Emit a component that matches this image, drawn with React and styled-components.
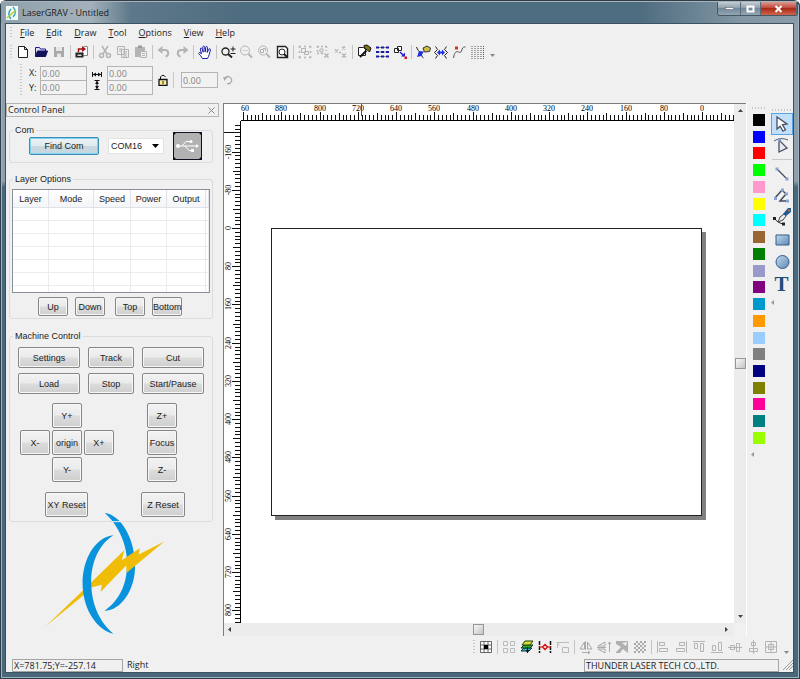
import { useLayoutEffect, useRef, useState } from "react";
import styled, { createGlobalStyle } from "styled-components";

const DARK = "#222";
const GREY = "#b4b4b4";
const BLUE = "#1a1aa8";

const icons = {
  new: <path d="M3.5 2.5h6l3 3v8h-9zM9.500 2.500v3h3" fill="#fff" stroke={DARK} />,
  open: (
    <>
      <path d="M2.500 12.500v-9h4l1 1.500h5v2" fill="#dde" stroke={BLUE} />
      <path d="M2.500 12.500l2-5.500h10l-2 5.500z" fill="#11115c" stroke="#11115c" />
    </>
  ),
  save: (
    <>
      <path d="M3 3h10v10H3z" fill="#a9a9a9" />
      <path d="M5 3h6v4H5zM6 9.500h4V13H6z" fill="#e6e6e6" />
    </>
  ),
  import: (
    <>
      <path d="M9.500 2.500h4v9h-4" fill="#fff" stroke="#888" />
      <path d="M1.500 8.500h8v5h-8z" fill="#222" />
      <path d="M3.500 10.500h4v1.500h-4z" fill="#ddd" />
      <path d="M4.500 8V5H9" fill="none" stroke="#a01010" strokeWidth="1.500" />
      <path d="M8 2l4 3-4 3z" fill="#a01010" />
    </>
  ),
  cut: (
    <g fill="none" stroke={GREY} strokeWidth="1.500">
      <path d="M5 2l5 8M11 2l-5 8" />
      <circle cx="4.500" cy="11.500" r="2" />
      <circle cx="11.500" cy="11.500" r="2" />
    </g>
  ),
  copy: (
    <g fill="#eee" stroke={GREY}>
      <path d="M2.500 2.500h7v8h-7zM6.500 5.500h7v8h-7z" />
      <path d="M4 5h3M4 7h2M8 8h4M8 10h4M8 12h4" />
    </g>
  ),
  paste: (
    <>
      <path d="M2 3h10v10H2z" fill={GREY} />
      <path d="M5 1.500h4v2.500H5z" fill="#999" />
      <path d="M7.500 7.500h6v6h-6zM9 9.500h3M9 11.500h3" fill="#eee" stroke={GREY} />
    </>
  ),
  undo: (
    <>
      <path d="M4 6h5.500a3.300 3.300 0 0 1 0 6.500" fill="none" stroke={GREY} strokeWidth="2" />
      <path d="M1.500 6L6.500 2v8z" fill={GREY} />
    </>
  ),
  redo: (
    <>
      <path d="M12 6H6.500a3.300 3.300 0 0 0 0 6.500" fill="none" stroke={GREY} strokeWidth="2" />
      <path d="M14.500 6L9.500 2v8z" fill={GREY} />
    </>
  ),
  hand: (
    <path
      d="M5.500 14.500c-1-2-2.500-3.500-3.800-5 .3-1.700 1.800-1 2.800.5L3.300 5c.3-1.500 1.600-1 2 .2l.9 3-.4-5c.2-1.500 1.700-1.500 1.900 0l.5 4.800.6-4.800c.4-1.300 1.700-1 1.700.3l-.3 5 1.600-3.300c.8-1 1.900-.4 1.600.8-.8 3-1.400 6-2.900 8.500z"
      fill="#fff"
      stroke={BLUE}
    />
  ),
  zoom: (
    <g fill="none" stroke={DARK}>
      <circle cx="5.500" cy="7.500" r="3.500" strokeWidth="1.300" />
      <path d="M8 10l4 3.500" strokeWidth="2" />
      <path d="M10.500 5h5M13 2.500v5M10.500 9.500h5" />
    </g>
  ),
  zoomOut: (
    <g fill="none" stroke={GREY}>
      <circle cx="7" cy="6.500" r="4.500" />
      <path d="M4.500 6.500h5" strokeDasharray="1 1" />
      <path d="M10.500 10l3.500 3.500" strokeWidth="2" />
    </g>
  ),
  zoomAll: (
    <g fill="none" stroke={GREY}>
      <circle cx="7" cy="6.500" r="4.500" />
      <path d="M4.500 5.500h3v3h-3zM7 4.500h2.500V7" />
      <path d="M10.500 10l3.500 3.500" strokeWidth="2" />
    </g>
  ),
  zoomPage: (
    <g fill="none" stroke={DARK}>
      <path d="M3.500 2.500h8l2 2v9h-10z" fill="#fff" strokeWidth="1.400" />
      <circle cx="8" cy="8" r="3" />
      <path d="M10 10l3 3" strokeWidth="2" />
    </g>
  ),
  group: (
    <g fill="none" stroke={GREY}>
      <path d="M2 2.500h12M2 13.500h12M2.500 2v12M13.500 2v12" strokeDasharray="2 3" strokeWidth="1.500" />
      <path d="M4.500 4.500h4v4h-4zM7.500 7.500h4v3h-4z" />
    </g>
  ),
  ungroup: (
    <g fill="none" stroke={GREY}>
      <path d="M2 2.500h9M2 9.500h6M2.500 2v8M11.500 2v5" strokeDasharray="2 2" strokeWidth="1.500" />
      <path d="M5 5h3v3H5z" />
      <path d="M9.500 9.500l4 4M13.500 9.500l-4 4" strokeWidth="1.500" />
    </g>
  ),
  ungroupAll: (
    <g fill="none" stroke={GREY} strokeWidth="1.300">
      <path d="M2 5.500l3 3M5 5.500l-3 3M9 2.500l3 3M12 2.500l-3 3" />
      <path d="M9 9.500l4 4M13 9.500l-4 4M6 8.500h2" />
    </g>
  ),
  hammer: (
    <>
      <path d="M2.500 3.500h5l2 2v6h-7z" fill="#fff" stroke={DARK} />
      <path d="M8 1.500l3-.5 4 3-1.500 4-2-2-3-1.500z" fill="#7d7414" stroke="#111" />
      <path d="M10.500 6.500L4 13" stroke="#111" strokeWidth="2" />
    </>
  ),
  array: (
    <>
      <path d="M2 3.500h13M2 8h13M2 12.500h13" stroke="#888" />
      <g fill={BLUE}>
        {[2.5, 7, 11.5].map((y) =>
          [2, 7, 12].map((x) => <rect key={`${x}-${y}`} x={x} y={y} width="3" height="2" />)
        )}
      </g>
    </>
  ),
  follow: (
    <>
      <path d="M5.500 2.500h4v4h-4zM2.500 4.500h4v4h-4z" fill="#fff" stroke={DARK} />
      <path d="M8 8l4 4" stroke="#2020d0" strokeWidth="1.500" />
      <path d="M9 12.500h4v-4z" fill="#2020d0" />
      <path d="M12.500 12.500h2.500v2.500h-2.500z" fill="#d01010" />
    </>
  ),
  node: (
    <>
      <path d="M1.500 3c1 3 2.500 4 4 6s1 4 3 5" fill="none" stroke={DARK} />
      <path d="M4 7l5 .5-3 4.500-4 1z" fill="#2030e0" />
      <path d="M8 4l4-2 3.500 2-1 3.500-5 .5z" fill="#c9c04a" stroke="#333" />
    </>
  ),
  mirror: (
    <>
      <path d="M2.500 2.500l2 3-3 3 3 3-2 3M13.500 2.500l-2 3 3 3-3 3 2 3" fill="none" stroke={DARK} />
      <path d="M4 8.500L7 5.500v2h2v-2l3 3-3 3v-2H7v2z" fill="#2030e0" />
    </>
  ),
  curve: (
    <>
      <path d="M2.500 14c1-6 3-7 5-6s3 0 3.500-2.500S13 3 14.500 3" fill="none" stroke="#555" />
      <path d="M4 2.500h3v3H4z" fill="#e03020" />
    </>
  ),
  dots: (
    <path d="M3 2v13M6 2v13M9 2v13M12 2v13M14.500 2v13" stroke="#555" strokeDasharray="1 1" fill="none" />
  ),
  anchor: (
    <>
      <path d="M2.500 2.500h11v11h-11zM2.500 6h11M2.500 10h11M6 2.500v11M10 2.500v11" fill="#fff" stroke="#666" />
      <path d="M6 6h4v4H6z" fill="#000" />
    </>
  ),
  tiles: <path d="M2.500 2.500h4v4h-4zM9.500 2.500h4v4h-4zM2.500 9.500h4v4h-4zM9.500 9.500h4v4h-4z" fill="none" stroke="#bbb" />,
  stack: (
    <>
      <path d="M2 12l3-3h8l-3 3z" fill="#23c3d8" stroke="#134" />
      <path d="M2 9l3-3h9l-3 3z" fill="#27b432" stroke="#131" />
      <path d="M3 6l3-4h8l-3 4z" fill="#d8dc34" stroke="#241" />
      <path d="M8.500 8v6" stroke="#111" />
      <path d="M6.500 11h4l-2 3z" fill="#111" />
    </>
  ),
  spacing: (
    <>
      <path d="M2.500 2v12M13.500 2v12" stroke="#111" strokeWidth="1.500" strokeDasharray="4 1" />
      <path d="M5.500 8L8 5.500 10.500 8 8 10.500z" fill="none" stroke="#e01010" strokeWidth="1.500" />
      <path d="M2 8h3M11 8h3" stroke="#e01010" />
    </>
  ),
  corner: <path d="M2.500 9V3.500H14M5 6.500l-3-3M7.500 8.500h6v5h-6z" fill="none" stroke="#bbb" />,
  flipH: <path d="M7.500 2v9M6.500 3v7h-4.500zM9.500 3v7h4.500zM4 13.500h8M10 12l2 1.500-2 1.500" fill="none" stroke="#aaa" />,
  flipV: <path d="M1 8.500h9M9 7V3L2 7zM9 10v4l-7-4zM13.500 13V3M12 5l1.500-2L15 5" fill="none" stroke="#aaa" />,
  rotate: (
    <>
      <path d="M2 2h12v12H2z" fill="#b0b0b0" />
      <path d="M2 5l5 3-5 5zM8 4l5-1-1 4zM6 14l3-4 5 4z" fill="#f0f0f0" />
    </>
  ),
  checker: (
    <g fill="#aaa">
      {[2, 4, 6, 8, 10, 12].map((y) =>
        [0, 4, 8].map((x) => <rect key={`${x}-${y}`} x={x + 2 + (y % 4 ? 2 : 0)} y={y} width="2" height="2" />)
      )}
    </g>
  ),
  alignLeft: <path d="M2.500 2v12M4.500 3.500h5v3h-5zM4.500 9.500h8v3h-8z" fill="none" stroke="#b4b4b4" />,
  alignRight: <path d="M13.500 2v12M6.500 3.500h5v3h-5zM3.500 9.500h8v3h-8z" fill="none" stroke="#b4b4b4" />,
  alignTop: <path d="M2 2.500h12M3.500 4.500h3v5h-3zM9.500 4.500h3v8h-3z" fill="none" stroke="#b4b4b4" />,
  alignBottom: <path d="M2 13.500h12M3.500 6.500h3v5h-3zM9.500 3.500h3v8h-3z" fill="none" stroke="#b4b4b4" />,
  centerH: <path d="M1 8.500h14M3.500 6.500h4v4h-4zM9.500 4.500h3v8h-3z" fill="none" stroke="#b4b4b4" />,
  centerV: <path d="M8.500 1v14M6.500 3.500h4v3h-4zM4.500 9.500h8v3h-8z" fill="none" stroke="#b4b4b4" />,
  centerPage: <path d="M2.500 2.500h11v11h-11zM8 2.500v11M2.500 8h11M5.500 5.500h5v5h-5z" fill="none" stroke="#b4b4b4" />,
};

const drawIcons = {
  select: <path d="M5 3l10 7-4.500.8 3 5-2.500 1.400-2.800-5L5 15z" fill="#fff" stroke="#4a4f60" strokeWidth="1.300" />,
  shape: (
    <>
      <path d="M2 5c5-3 9-3 14-1" fill="none" stroke="#556" />
      <path d="M7 4v12l8-4z" fill="#e8ebf2" stroke="#4a4f60" strokeWidth="1.300" />
      <path d="M6 2.500h3v3H6z" fill="#7fa0cc" />
    </>
  ),
  line: (
    <>
      <path d="M5 5l10 10" stroke="#444a5c" strokeWidth="1.300" />
      <path d="M3.500 3.500h3v3h-3zM13.500 13.500h3v3h-3z" fill="#8aa3d6" />
    </>
  ),
  polyline: (
    <>
      <path d="M3 12l7-8 4 4-6 7h8" fill="none" stroke="#444a5c" strokeWidth="1.500" />
      <path d="M9 2.500h3v3H9zM13 6.500h3v3h-3zM2 11h3v3H2zM14 13.500h3v3h-3z" fill="#8aa3d6" />
    </>
  ),
  pen: (
    <>
      <path d="M2 10c2 3 5 5 9 6" fill="none" stroke="#222" />
      <path d="M1 9h3v3H1zM10 14.500h3v3h-3z" fill="#222" />
      <path d="M6 14l2-5 4-3 2 2-3 4z" fill="#eee" stroke="#444" />
      <path d="M11 6l5-6h3v4l-5 4z" fill="#245a91" />
      <path d="M16 2l2 1" stroke="#d96b33" strokeWidth="1.500" />
    </>
  ),
  rect: <path d="M4 5h13v10H4z" fill="url(#toolFill)" stroke="#345c87" />,
  ellipse: <circle cx="10.500" cy="10" r="6.500" fill="url(#toolFill)" stroke="#345c87" />,
};

const colors = [
  "#000000", "#0000ff", "#ff0000", "#00ff00", "#ff99cc", "#ffff00", "#00ffff",
  "#996633", "#008000", "#9999cc", "#800080", "#0099cc", "#ff9900", "#99ccff",
  "#808080", "#000080", "#808000", "#ff0099", "#008080", "#99ff00",
];

const menus = ["File", "Edit", "Draw", "Tool", "Options", "View", "Help"];

const mainTools = [
  ["new", "open", "save"],
  ["import"],
  ["cut", "copy", "paste"],
  ["undo", "redo"],
  ["hand"],
  ["zoom", "zoomOut", "zoomAll", "zoomPage"],
  ["group", "ungroup", "ungroupAll"],
  ["hammer", "array", "follow"],
  ["node", "mirror", "curve", "dots"],
];

const alignTools = [
  ["anchor"],
  ["tiles", "stack", "spacing", "corner"],
  ["flipH", "flipV", "rotate", "checker"],
  ["alignLeft", "alignRight", "alignTop", "alignBottom", "centerH", "centerV", "centerPage"],
];

// ruler units are mm, one tick every 8mm
const SCALE = 0.478;
const STEP = 8 * SCALE;
const tickPos = (n) => Math.round(n * STEP);
const tickSize = (n) => (n % 10 === 0 ? 8 : n % 5 === 0 ? 7 : 5);
const range = (from, to) => Array.from({ length: Math.max(0, to - from + 1) }, (_, i) => from + i);

function useSize() {
  const ref = useRef(null);
  const [size, setSize] = useState({ width: 0, height: 0 });

  useLayoutEffect(() => {
    const measure = () => {
      const { width, height } = ref.current.getBoundingClientRect();
      setSize({ width, height });
    };
    measure();
    window.addEventListener("resize", measure);
    return () => window.removeEventListener("resize", measure);
  }, []);

  return [ref, size];
}

function HorizontalRuler() {
  const [ref, { width }] = useSize();
  const origin = Math.round(width) - 32;
  const count = Math.floor(origin / STEP);

  return (
    <RulerSvg ref={ref}>
      {range(-8, count).map((n) => (
        <path key={n} d={`M${origin + 0.5 - tickPos(n)} ${16 - tickSize(n)}V16`} stroke="#111" />
      ))}
      {range(0, Math.floor(count / 10)).map((n) => (
        <text key={n} x={origin - tickPos(n * 10)} y="7" textAnchor="middle">
          {n * 80}
        </text>
      ))}
      <path d={`M${origin - 340.5} 0V12`} stroke="#456" />
      <rect y="16" width="100%" height="1" />
    </RulerSvg>
  );
}

function VerticalRuler() {
  const [ref, { height }] = useSize();
  const count = Math.floor((height - 107) / STEP);

  return (
    <RulerSvg ref={ref}>
      {range(-27, count).map((n) => (
        <path key={n} d={`M${16 - tickSize(n)} ${107.5 + tickPos(n)}H16`} stroke="#111" />
      ))}
      {range(-2, Math.floor((count - 2) / 10)).map((n) => (
        <text key={n} transform={`translate(7 ${107 + tickPos(n * 10)}) rotate(-90)`} textAnchor="middle">
          {n * 80}
        </text>
      ))}
      <path d="M0 11.500H9" stroke="#111" />
      <rect x="16" width="1" height="100%" />
    </RulerSvg>
  );
}

function IconGroups({ groups }) {
  return groups.map((group, i) => (
    <ToolGroup key={i}>
      {group.map((name) => (
        <ToolButton key={name} aria-label={name}>
          <svg width="16" height="16" viewBox="0 0 16 16">{icons[name]}</svg>
        </ToolButton>
      ))}
    </ToolGroup>
  ));
}

function ControlPanel() {
  return (
    <Panel>
      <PanelTitle>
        Control Panel
        <PanelClose aria-label="close panel">
          <svg width="7" height="7" viewBox="0 0 7 7">
            <path d="M.5.5l6 6M6.500.5l-6 6" stroke="#888" />
          </svg>
        </PanelClose>
      </PanelTitle>

      <Group $top={7}>
        <legend>Com</legend>
        <ComRow>
          <PushButton $w={70} $h={18} $primary>Find Com</PushButton>
          <ComSelect>
            <select aria-label="Com port" defaultValue="COM16">
              <option>COM16</option>
            </select>
            <svg width="7" height="4" viewBox="0 0 7 4">
              <path d="M0 0h7L3.500 4z" fill="#000" />
            </svg>
          </ComSelect>
          <svg width="29" height="28" viewBox="0 0 29 28">
            <rect width="29" height="28" fill="#101025" />
            <path d="M3 1h23l2 2v22l-2 2H3l-2-2V3z" fill="#b2b2b2" />
            <g fill="none" stroke="#fff">
              <path d="M5 14h19M9 14l4-4.500h4M12 14l4 4.500h3" />
            </g>
            <circle cx="5" cy="14" r="2" fill="#fff" />
            <path d="M23 12l3 2-3 2zM18 17h3v3h-3z" fill="#fff" />
            <circle cx="18" cy="9.500" r="1.500" fill="#fff" />
          </svg>
        </ComRow>
      </Group>

      <Group $top={10}>
        <legend>Layer Options</legend>
        <LayerTable>
          <colgroup>
            <col width="36" />
            <col width="45" />
            <col width="37" />
            <col width="36" />
            <col width="39" />
            <col />
          </colgroup>
          <thead>
            <tr>
              <th>Layer</th>
              <th>Mode</th>
              <th>Speed</th>
              <th>Power</th>
              <th>Output</th>
              <td />
            </tr>
          </thead>
          <tbody>
            {range(1, 7).map((row) => (
              <tr key={row}>
                {range(1, 6).map((cell) => <td key={cell} />)}
              </tr>
            ))}
          </tbody>
        </LayerTable>
        <OrderRow>
          <PushButton $w={30} $h={19}>Up</PushButton>
          <PushButton $w={30} $h={19}>Down</PushButton>
          <PushButton $w={30} $h={19}>Top</PushButton>
          <PushButton $w={30} $h={19}>Bottom</PushButton>
        </OrderRow>
      </Group>

      <Group $top={11}>
        <legend>Machine Control</legend>
        <MachineGrid>
          <PushButton $h={21}>Settings</PushButton>
          <PushButton $h={21}>Track</PushButton>
          <PushButton $h={21}>Cut</PushButton>
          <PushButton $h={21}>Load</PushButton>
          <PushButton $h={21}>Stop</PushButton>
          <PushButton $h={21}>Start/Pause</PushButton>
        </MachineGrid>
        <JogRow>
          <JogPad>
            <i />
            <PushButton $h={25}>Y+</PushButton>
            <i />
            <PushButton $h={25}>X-</PushButton>
            <PushButton $h={25}>origin</PushButton>
            <PushButton $h={25}>X+</PushButton>
            <i />
            <PushButton $h={25}>Y-</PushButton>
          </JogPad>
          <JogColumn>
            <PushButton $h={25}>Z+</PushButton>
            <PushButton $h={25}>Focus</PushButton>
            <PushButton $h={25}>Z-</PushButton>
          </JogColumn>
        </JogRow>
        <ResetRow>
          <PushButton $w={43} $h={25}>XY Reset</PushButton>
          <PushButton $w={44} $h={25}>Z Reset</PushButton>
        </ResetRow>
      </Group>

      <Logo viewBox="136 36 364 370">
        <path d="M315 38C365 45 407 115 407 200C407 270 365 333 315 333C355 305 383 260 383 190C383 125 350 68 315 38z" fill="#0893dc" />
        <path d="M338 65h32" stroke="#f0f0f0" strokeWidth="3" />
        <path d="M138 380L250 272L375 150L367 181L421 145L418 164L495 125L382 219L380 197L303 277L307 255L272 264L250 288z" fill="#efbd08" />
        <path d="M342 106C290 110 249 175 249 250C249 330 295 393 342 402C305 372 275 320 275 245C275 185 300 132 342 106z" fill="#0893dc" />
      </Logo>
    </Panel>
  );
}

function App() {
  const [tool, setTool] = useState("select");

  return (
    <AppWindow>
      <GlobalStyle />
      <TitleBar>
        <svg width="12" height="14" viewBox="0 0 12 14">
          <rect width="12" height="14" fill="#f4faf4" />
          <path d="M7 1c3 3 3 7 0 10M5 3C2 6 2 9 5 13" fill="none" stroke="#39a4c4" strokeWidth="1.500" />
          <path d="M1 12l9-8" stroke="#b9c93a" strokeWidth="1.500" />
        </svg>
        <h1>LaserGRAV - Untitled</h1>
        <WindowButtons>
          <WindowButton $w={23} aria-label="Minimize">
            <svg width="9" height="5"><rect x=".5" y="1.500" width="8" height="2" fill="#fff" stroke="#556" strokeWidth=".5" /></svg>
          </WindowButton>
          <WindowButton $w={20} aria-label="Maximize">
            <svg width="9" height="8"><rect x="1.500" y="1.500" width="6" height="5" fill="none" stroke="#fff" strokeWidth="2" /></svg>
          </WindowButton>
          <WindowButton $w={36} $close aria-label="Close">
            <svg width="9" height="8"><path d="M1.500 1l6 6M7.500 1l-6 6" stroke="#fff" strokeWidth="2" /></svg>
          </WindowButton>
        </WindowButtons>
      </TitleBar>

      <Client>
        <MenuBar>
          <Grip $h={12} />
          {menus.map((m) => (
            <button key={m}><u>{m[0]}</u>{m.slice(1)}</button>
          ))}
        </MenuBar>

        <ToolBar>
          <Grip $h={14} />
          <IconGroups groups={mainTools} />
          <More>
            <svg width="5" height="3"><path d="M0 0h5L2.500 3z" fill="#888" /></svg>
          </More>
        </ToolBar>

        <PropertyBar>
          <Grip $h={32} />
          <FieldStack>
            <label>X: <Field defaultValue="0.00" disabled $w={47} /></label>
            <label>Y: <Field defaultValue="0.00" disabled $w={47} /></label>
          </FieldStack>
          <svg width="10" height="22" viewBox="0 0 10 22">
            <path d="M.5 3v5M9.500 3v5M1 5.500h8M5 12v8M2.500 11.500h5M2.500 20.500h5" stroke="#111" />
            <path d="M1 5.500l3-2v4zM9 5.500l-3-2v4zM5 12l-2 3h4zM5 20l-2-3h4z" fill="#111" />
          </svg>
          <FieldStack>
            <Field aria-label="Width" defaultValue="0.00" disabled $w={46} />
            <Field aria-label="Height" defaultValue="0.00" disabled $w={46} />
          </FieldStack>
          <svg width="10" height="12" viewBox="0 0 10 12">
            <path d="M2.500 5V3Q5-.5 7.500 3" fill="none" stroke="#111" />
            <path d="M1 5.500h8v6H1z" fill="#f5edb8" stroke="#111" strokeWidth="1.300" />
            <path d="M5 7v3" stroke="#a88b00" strokeWidth="2" />
          </svg>
          <Divider />
          <Field aria-label="Angle" defaultValue="0.00" disabled $w={37} $tall />
          <svg width="10" height="10" viewBox="0 0 10 10">
            <path d="M2 3.500A3.500 3.500 0 1 1 4 8.500" fill="none" stroke="#aaa" strokeWidth="1.300" />
            <path d="M0 2l4 .5L1.500 6z" fill="#aaa" />
          </svg>
        </PropertyBar>

        <Body>
          <ControlPanel />

          <Workspace>
            <Corner />
            <HorizontalRuler />
            <VScroll>
              <svg width="5" height="3"><path d="M0 3h5L2.500 0z" fill="#444" /></svg>
              <Thumb />
              <svg width="5" height="3"><path d="M0 0h5L2.500 3z" fill="#444" /></svg>
            </VScroll>
            <VerticalRuler />
            <Canvas>
              <Page />
            </Canvas>
            <HScroll>
              <svg width="3" height="5"><path d="M3 0v5L0 2.500z" fill="#444" /></svg>
              <Thumb />
              <svg width="3" height="5"><path d="M0 0v5l3-2.500z" fill="#444" /></svg>
            </HScroll>
          </Workspace>

          <Palette>
            <HGrip $w={14} />
            <Swatches>
              {colors.map((c) => <Swatch key={c} $color={c} aria-label={c} />)}
            </Swatches>
            <svg width="3" height="5"><path d="M3 0v5L0 2.500z" fill="#999" /></svg>
          </Palette>

          <DrawTools>
            <HGrip $w={20} />
            {["select", "shape", null, "line", "polyline", "pen", "rect", "ellipse", "text"].map((name) =>
              name ? (
                <DrawButton key={name} aria-label={name} $active={tool === name} onClick={() => setTool(name)}>
                  {name === "text" ? (
                    "T"
                  ) : (
                    <svg width="20" height="20" viewBox="0 0 20 20">
                      <defs>
                        <linearGradient id="toolFill" x2="1" y2="1">
                          <stop stopColor="#c4dbef" />
                          <stop offset="1" stopColor="#5c88b4" />
                        </linearGradient>
                      </defs>
                      {drawIcons[name]}
                    </svg>
                  )}
                </DrawButton>
              ) : (
                <ToolRule key="rule" />
              )
            )}
            <svg width="3" height="5"><path d="M3 0v5L0 2.500z" fill="#999" /></svg>
          </DrawTools>
        </Body>

        <AlignBar>
          <Grip $h={14} />
          <IconGroups groups={alignTools} />
          <More>
            <svg width="5" height="3"><path d="M0 0h5L2.500 3z" fill="#888" /></svg>
          </More>
        </AlignBar>

        <StatusBar>
          <StatusBox $w={111}>X=781.75;Y=-257.14</StatusBox>
          <span>Right</span>
          <StatusBox $w={195}>THUNDER LASER TECH CO.,LTD.</StatusBox>
          <svg width="10" height="10" viewBox="0 0 10 10">
            <path d="M0 10L10 0M3 10l7-7M6 10l4-4" stroke="#999" />
          </svg>
        </StatusBar>
      </Client>
    </AppWindow>
  );
}

export default App;

const GlobalStyle = createGlobalStyle`
  * {
    box-sizing: border-box;
  }
  body {
    margin: 0;
    font-family: "Open Sans", "Noto Sans", sans-serif;
    font-size: 9px;
    line-height: 12px;
    color: #1c1c1c;
  }
  button, input, select {
    margin: 0;
    padding: 0;
    font: inherit;
    color: inherit;
  }
  svg {
    display: block;
    flex: none;
  }
`;

const AppWindow = styled.div`
  display: flex;
  flex-direction: column;
  min-height: 100vh;
  padding: 0 6px 6px 5px;
  border-top: 1px solid #343c45;
  border-radius: 6px 6px 0 0;
  background: linear-gradient(#8d9fab 0, #8d9fab 180px, #4a687b 186px, #4a687b);
  box-shadow: inset 0 0 0 1px #2e3f4b, inset 0 0 0 2px #9fb4c0;
`;

const TitleBar = styled.header`
  display: flex;
  align-items: center;
  height: 22px;
  margin: 0 -4px;
  padding-left: 5px;
  border-top: 1px solid #a5b5bf;
  background: linear-gradient(90deg, #8fa1ad 0, #a3b1ba 90px, #5d788a 130px, #4f6d80 240px, #4f6d80 640px, #8296a3 740px, #8a9ca8);

  h1 {
    margin: 0 0 0 4px;
    font-size: 9px;
    font-weight: 400;
  }
`;

const WindowButtons = styled.div`
  display: flex;
  align-self: flex-start;
  margin-left: auto;
  border: 1px solid #445764;
  border-top: 0;
  border-radius: 0 0 3px 3px;
  overflow: hidden;
`;

const WindowButton = styled.button`
  display: flex;
  align-items: center;
  justify-content: center;
  width: ${(p) => p.$w}px;
  height: 13px;
  border: 0;
  border-right: 1px solid #5a6b77;
  background: ${(p) =>
    p.$close
      ? "linear-gradient(#d99a8e, #c0493a 45%, #a92a17 50%, #d0644c)"
      : "linear-gradient(#c3cdd4, #8fa0ac 45%, #73889a 50%, #93a6b2)"};
`;

const Client = styled.main`
  display: flex;
  flex: 1;
  flex-direction: column;
  border: 1px solid #3c5261;
  background: #f0f0f0;
`;

const MenuBar = styled.nav`
  display: flex;
  align-items: center;
  height: 18px;
  padding-left: 4px;

  button {
    padding: 0 6px;
    border: 0;
    background: none;
  }
`;

const ToolBar = styled.div`
  display: flex;
  align-items: center;
  height: 19px;
  padding-left: 4px;
`;

const Grip = styled.span`
  width: 2px;
  height: ${(p) => p.$h}px;
  margin-right: 2px;
  background: repeating-linear-gradient(#c8c8c8 0 1px, transparent 1px 3px);
`;

const HGrip = styled.span`
  width: ${(p) => p.$w}px;
  height: 2px;
  background: repeating-linear-gradient(90deg, #c8c8c8 0 1px, transparent 1px 3px);
`;

const ToolGroup = styled.div`
  display: flex;
  align-items: center;

  & + &::before {
    content: "";
    width: 1px;
    height: 14px;
    margin: 0 2px;
    background: #c4c4c4;
  }
`;

const ToolButton = styled.button`
  display: flex;
  align-items: center;
  justify-content: center;
  width: 18px;
  height: 18px;
  border: 0;
  background: none;
`;

const More = styled.span`
  align-self: flex-end;
  padding: 4px;
`;

const PropertyBar = styled.div`
  display: flex;
  align-items: center;
  gap: 5px;
  height: 42px;
  padding: 0 0 4px 14px;
`;

const FieldStack = styled.div`
  display: flex;
  flex-direction: column;

  label {
    display: flex;
    align-items: center;
    justify-content: space-between;
    width: 58px;
  }
`;

const Field = styled.input`
  width: ${(p) => p.$w}px;
  height: ${(p) => (p.$tall ? 16 : 15)}px;
  padding: 0 1px;
  border: 1px solid #b4b4b4;
  background: #f2f2f2;
  color: #838383;

  label + label &,
  & + & {
    height: 14px;
    border-top: 0;
  }
`;

const Divider = styled.span`
  width: 1px;
  height: 16px;
  margin-right: 2px;
  background: #c8c8c8;
`;

const Body = styled.div`
  display: flex;
  flex: 1;
`;

const Panel = styled.aside`
  display: flex;
  flex: none;
  flex-direction: column;
  width: 213px;
  margin-right: 4px;
  font-family: "Liberation Sans", sans-serif;
`;

const PanelTitle = styled.div`
  display: flex;
  align-items: center;
  justify-content: space-between;
  height: 14px;
  padding: 0 3px 0 1px;
  border: 1px solid #b4b4b4;
  font-family: "Open Sans", "Noto Sans", sans-serif;
`;

const PanelClose = styled.button`
  border: 0;
  background: none;
`;

const Group = styled.fieldset`
  min-width: 0;
  margin: ${(p) => p.$top}px 6px 0 3px;
  padding: 0 2px 2px;
  border: 1px solid #dcdcdc;
  border-radius: 3px;

  legend {
    margin-left: 1px;
    padding: 0 2px;
  }
`;

const PushButton = styled.button`
  width: ${(p) => (p.$w ? `${p.$w}px` : "auto")};
  height: ${(p) => p.$h}px;
  border: 1px solid ${(p) => (p.$primary ? "#3c8fb4" : "#868686")};
  border-radius: 2px;
  background: ${(p) =>
    p.$primary
      ? "linear-gradient(#eef4f7, #dfe9ee 48%, #c9d8df 52%, #c6d7df)"
      : "linear-gradient(#f2f2f2, #ebebeb 48%, #dcdcdc 52%, #cfcfcf)"};
  box-shadow: inset 0 0 0 1px ${(p) => (p.$primary ? "#7fd4f2" : "#f7f7f7")};
  line-height: 10px;
  white-space: nowrap;
`;

const ComRow = styled.div`
  display: flex;
  align-items: center;
  gap: 9px;
  margin-top: -4px;
  padding-left: 17px;
`;

const ComSelect = styled.div`
  display: flex;
  align-items: center;
  width: 56px;
  height: 16px;
  padding: 0 4px 0 2px;
  border: 1px solid #e2e2e2;
  background: #fff;

  select {
    flex: 1;
    min-width: 0;
    border: 0;
    appearance: none;
    background: none;
  }
`;

const LayerTable = styled.table`
  width: 100%;
  height: 104px;
  margin-top: 4px;
  border: 1px solid #8b919b;
  border-spacing: 0;
  table-layout: fixed;
  background: #fff;

  th, td {
    height: 13px;
    padding: 0;
    border: solid #ececec;
    border-width: 0 1px 1px 0;
    font-weight: 400;
  }
  thead th, thead td {
    height: 18px;
    border-color: #dfe2e8;
    background: linear-gradient(#fff, #f4f5f7);
  }
  tbody tr:last-child td {
    height: 6px;
    border-bottom: 0;
  }
`;

const OrderRow = styled.div`
  display: flex;
  gap: 7px;
  margin-top: 4px;
  padding-left: 26px;

  button:nth-child(3) {
    margin-left: 3px;
  }
`;

const MachineGrid = styled.div`
  display: grid;
  grid-template-columns: 62px 46px 62px;
  gap: 5px 8px;
  padding: 5px 0 9px 6px;
`;

const JogRow = styled.div`
  display: flex;
  gap: 33px;
  padding-left: 8px;
`;

const JogPad = styled.div`
  display: grid;
  grid-template-columns: repeat(3, 30px);
  gap: 2px;
`;

const JogColumn = styled.div`
  display: grid;
  grid-template-columns: 30px;
  gap: 2px;
`;

const ResetRow = styled.div`
  display: flex;
  gap: 53px;
  padding: 10px 0 2px 33px;
`;

const Logo = styled.svg`
  width: 121px;
  height: 123px;
  margin: -10px 0 0 39px;
`;

const Workspace = styled.section`
  display: grid;
  flex: 1;
  grid-template-columns: 17px 1fr 12px;
  grid-template-rows: 17px 1fr 13px;
  min-width: 0;
  border-top: 1px solid #7c7c7c;
  border-left: 1px solid #7c7c7c;
`;

const Corner = styled.div`
  background: #fff;
`;

const RulerSvg = styled.svg`
  width: 100%;
  height: 100%;
  min-height: 0;
  contain: size;
  background: #fff;
  font-family: "Liberation Serif", serif;
  font-size: 8px;
`;

const Canvas = styled.div`
  display: flex;
  justify-content: flex-end;
  align-items: flex-start;
  min-width: 0;
  padding: 107px 32px 0 0;
  overflow: hidden;
  background: #fff;
`;

const Page = styled.div`
  flex: none;
  width: 431px;
  height: 288px;
  border: 1px solid #222;
  background: #fff;
  box-shadow: 4px 4px 0 #808080;
`;

const VScroll = styled.div`
  display: flex;
  grid-row: 1 / 3;
  grid-column: 3;
  flex-direction: column;
  align-items: center;
  justify-content: space-between;
  padding: 5px 0;
  background: #ececec;
`;

const HScroll = styled.div`
  display: flex;
  grid-column: 1 / 3;
  align-items: center;
  justify-content: space-between;
  padding: 0 6px 0 4px;
  background: #ececec;
`;

const Thumb = styled.span`
  width: 11px;
  height: 11px;
  border: 1px solid #979797;
  background: linear-gradient(135deg, #f8f8f8, #c4c4c4);
`;

const Palette = styled.div`
  display: flex;
  flex: none;
  flex-direction: column;
  align-items: center;
  width: 24px;
  padding: 4px 0 0;
  border-left: 1px solid #fff;

  > svg {
    align-self: flex-start;
    margin: 8px 0 0 4px;
  }
`;

const Swatches = styled.div`
  display: flex;
  flex-direction: column;
  justify-content: space-between;
  height: 330px;
  margin-top: 5px;
`;

const Swatch = styled.button`
  width: 12px;
  height: 12px;
  border: 0;
  background: ${(p) => p.$color};
`;

const DrawTools = styled.div`
  display: flex;
  flex: none;
  flex-direction: column;
  align-items: center;
  width: 23px;
  padding-top: 6px;

  > span + button {
    margin-top: 2px;
  }
  > svg {
    align-self: flex-start;
    margin: 5px 0 0 1px;
  }
`;

const DrawButton = styled.button`
  display: flex;
  align-items: center;
  justify-content: center;
  width: 22px;
  height: 22px;
  border: 1px solid ${(p) => (p.$active ? "#5aa2e0" : "transparent")};
  background: ${(p) => (p.$active ? "#c2e0fb" : "none")};
  color: #1f4e79;
  font: bold 21px "Liberation Serif", serif;
`;

const ToolRule = styled.i`
  width: 20px;
  height: 1px;
  margin: 2px 0 3px;
  background: #c8c8c8;
`;

const AlignBar = styled.div`
  display: flex;
  align-items: center;
  justify-content: flex-end;
  height: 22px;
`;

const StatusBar = styled.footer`
  display: flex;
  align-items: center;
  gap: 4px;
  height: 14px;
  padding: 0 0 0 6px;

  span {
    flex: 1;
  }
`;

const StatusBox = styled.div`
  width: ${(p) => p.$w}px;
  height: 13px;
  padding-left: 1px;
  border: 1px solid #a5a5a5;
  line-height: 12px;
`;
